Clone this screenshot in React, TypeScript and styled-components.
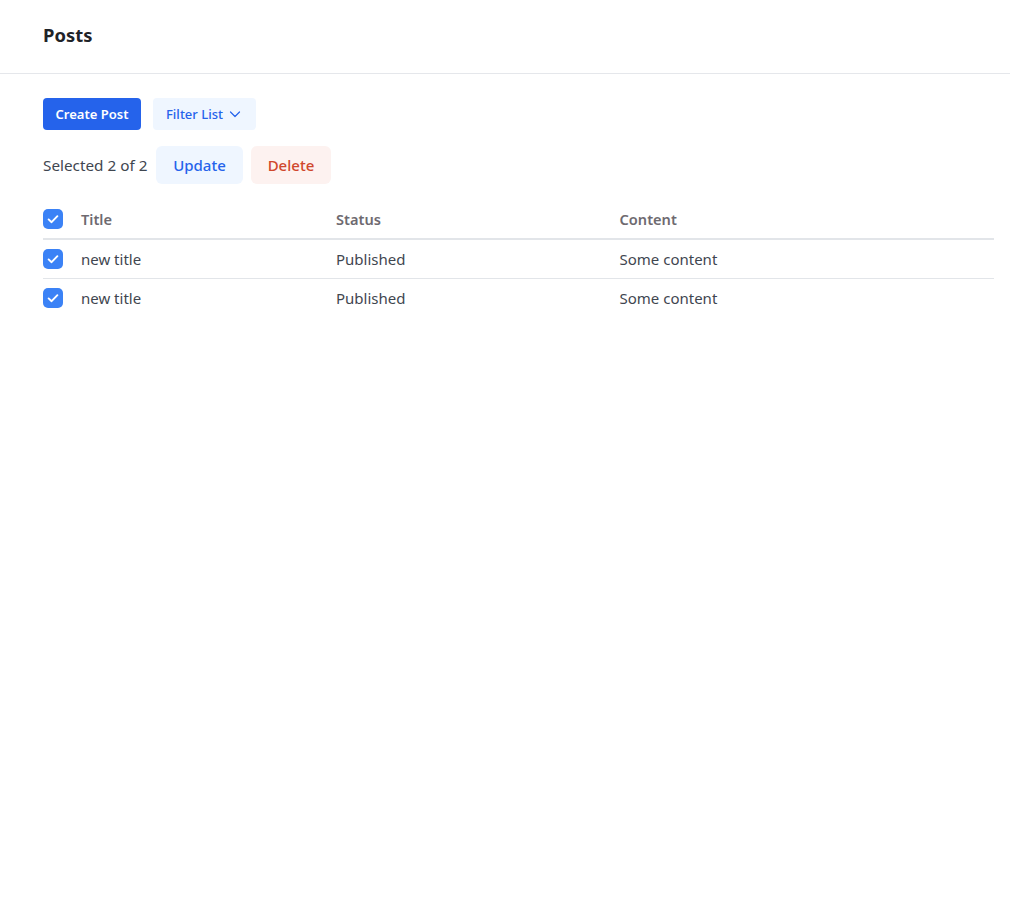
import React from 'react';
import styled, { createGlobalStyle } from 'styled-components';

const GlobalStyle = createGlobalStyle`
  html, body {
    margin: 0;
    padding: 0;
    background-color: #fff;
    font-family: "Noto Sans", "Open Sans", sans-serif;
  }
`;

const Header = styled.header`
  display: flex;
  align-items: center;
  box-sizing: border-box;
  height: 74px;
  padding: 0 0 5px 43px;
  border-bottom: 1px solid #e5e7eb;
`;

const Heading = styled.h1`
  margin: 0;
  font-size: 18.4px;
  font-weight: 700;
  color: #1f2328;
`;

const Main = styled.main`
  padding: 24px 16px 0 43px;
`;

const Toolbar = styled.div`
  display: flex;
  gap: 12px;
`;

const SmallButton = styled.button<{ $primary?: boolean }>`
  display: flex;
  align-items: center;
  justify-content: ${props => (props.$primary ? 'center' : 'flex-start')};
  gap: 6px;
  width: ${props => (props.$primary ? '98px' : '103px')};
  height: 32px;
  padding: ${props => (props.$primary ? '0' : '0 0 0 13px')};
  border: 0;
  border-radius: 4px;
  font-family: inherit;
  font-size: 13px;
  font-weight: ${props => (props.$primary ? 600 : 500)};
  background-color: ${props => (props.$primary ? '#2563eb' : '#eff6ff')};
  color: ${props => (props.$primary ? '#fff' : '#2563eb')};
`;

const SelectionBar = styled.div`
  display: flex;
  align-items: center;
  margin-top: 16px;
  font-size: 15.3px;
  color: #3f4650;
`;

const SelectedText = styled.span`
  margin-right: 8.5px;
`;

const ActionButton = styled.button<{ $danger?: boolean }>`
  display: flex;
  align-items: center;
  justify-content: center;
  width: ${props => (props.$danger ? '80px' : '87px')};
  height: 38px;
  margin-right: 8px;
  padding: 0;
  border: 0;
  border-radius: 6px;
  font-family: inherit;
  font-size: 15px;
  font-weight: 500;
  background-color: ${props => (props.$danger ? '#fdf2f0' : '#eff6ff')};
  color: ${props => (props.$danger ? '#d0472c' : '#2563eb')};
`;

const Table = styled.div`
  margin-top: 16px;
`;

const Row = styled.div<{ $head?: boolean }>`
  display: grid;
  grid-template-columns: 38px 255px 283.5px 1fr;
  align-items: center;
  box-sizing: border-box;
  height: ${props => (props.$head ? '40px' : '39px')};
  border-bottom: ${props => (props.$head ? '2px solid #e2e5e9' : '1px solid #e2e5e9')};
  font-size: ${props => (props.$head ? '14.6px' : '15px')};
  font-weight: ${props => (props.$head ? 600 : 400)};
  color: ${props => (props.$head ? '#6e6a70' : '#3f4650')};

  &:last-child {
    height: 38px;
    border-bottom: 0;
  }
`;

const Check = styled.span`
  display: flex;
  align-items: center;
  justify-content: center;
  width: 20px;
  height: 20px;
  border-radius: 5px;
  background-color: #3b82f6;
`;

function CheckBox() {
  return (
    <Check>
      <svg width="14" height="14" viewBox="0 0 14 14" fill="none" stroke="#fff" strokeWidth="1.9" strokeLinecap="round" strokeLinejoin="round">
        <path d="M2.6 7.4 L5.6 10.2 L11.4 4.2" />
      </svg>
    </Check>
  );
}

const posts = [
  { id: 1, title: 'new title', status: 'Published', content: 'Some content' },
  { id: 2, title: 'new title', status: 'Published', content: 'Some content' },
];

export default function App() {
  return (
    <>
      <GlobalStyle />
      <Header>
        <Heading>Posts</Heading>
      </Header>
      <Main>
        <Toolbar>
          <SmallButton $primary>Create Post</SmallButton>
          <SmallButton>
            Filter List
            <svg width="12" height="12" viewBox="0 0 12 12" fill="none" stroke="#2563eb" strokeWidth="1.2" strokeLinecap="round" strokeLinejoin="round">
              <path d="M1.5 4 L6 8.5 L10.5 4" />
            </svg>
          </SmallButton>
        </Toolbar>
        <SelectionBar>
          <SelectedText>Selected 2 of 2</SelectedText>
          <ActionButton>Update</ActionButton>
          <ActionButton $danger>Delete</ActionButton>
        </SelectionBar>
        <Table>
          <Row $head>
            <CheckBox />
            <span>Title</span>
            <span>Status</span>
            <span>Content</span>
          </Row>
          {posts.map((post) => (
            <Row key={post.id}>
              <CheckBox />
              <span>{post.title}</span>
              <span>{post.status}</span>
              <span>{post.content}</span>
            </Row>
          ))}
        </Table>
      </Main>
    </>
  );
}
